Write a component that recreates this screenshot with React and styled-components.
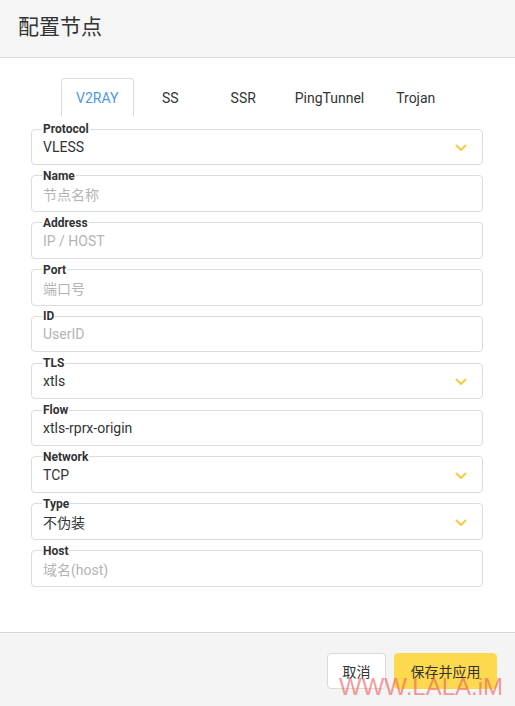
import React from "react";
import styled, { createGlobalStyle } from "styled-components";

const Global = createGlobalStyle`
  html, body { margin: 0; padding: 0; background: #fff; }
  body { font-family: Roboto, "Noto Sans CJK SC", sans-serif; color: #333; }
  * { box-sizing: border-box; }
`;

const Page = styled.div`
  height: 706px;
  display: flex;
  flex-direction: column;
  position: relative;
  overflow: hidden;
`;

const Header = styled.header`
  height: 58px;
  flex: none;
  background: #f5f5f5;
  border-bottom: 1px solid #d9d9d9;
  display: flex;
  align-items: center;
  padding: 0 0 7px 18px;
  font-family: "Noto Sans CJK SC", sans-serif;
  font-size: 21px;
  color: #333;
`;

const Body = styled.main`
  flex: 1;
  padding: 20px 32px 0 31px;
`;

const Tabs = styled.nav`
  display: flex;
  justify-content: center;
  height: 38px;
  margin-bottom: 6px;
  padding-right: 1px;
`;

const Tab = styled.div`
  min-width: 73px;
  padding: 0 14px;
  display: flex;
  align-items: center;
  justify-content: center;
  font-size: 14px;
  color: ${(p) => (p.$active ? "#4f97e6" : "#333")};
  border: 1px solid ${(p) => (p.$active ? "#dedede" : "transparent")};
  border-bottom: none;
  border-radius: 4px 4px 0 0;
`;

const Field = styled.fieldset`
  margin: 0 0 3.85px;
  padding: 0 11px 6px;
  border: 1px solid #dcdcdc;
  border-radius: 4px;
  min-width: 0;
`;

const Legend = styled.legend`
  padding: 0 1px;
  margin-left: -1px;
  font-size: 12px;
  font-weight: 700;
  line-height: 14px;
  color: #333;
`;

const Row = styled.div`
  height: 22px;
  display: flex;
  align-items: center;
  justify-content: space-between;
  font-family: Roboto, "Noto Sans CJK SC", sans-serif;
  font-size: 14px;
  color: ${(p) => (p.$placeholder ? "#b4b4b4" : "#333")};
`;

const Chevron = styled.svg`
  width: 12px;
  height: 8px;
  margin-right: 4px;
  margin-top: 2px;
`;

const Footer = styled.footer`
  height: 74px;
  flex: none;
  background: #f4f4f4;
  border-top: 1px solid #d6d6d6;
  display: flex;
  justify-content: flex-end;
  align-items: flex-start;
  gap: 8px;
  padding: 20px 18px 0 0;
`;

const Button = styled.button`
  height: 36px;
  width: ${(p) => (p.$primary ? "103px" : "59px")};
  padding: 0;
  border-radius: 4px;
  border: 1px solid ${(p) => (p.$primary ? "#fdd94f" : "#dadada")};
  background: ${(p) => (p.$primary ? "#fdd94f" : "#fff")};
  color: #333;
  font-family: "Noto Sans CJK SC", sans-serif;
  font-size: 14px;
  cursor: pointer;
`;

const Watermark = styled.div`
  position: absolute;
  left: 339px;
  top: 673px;
  font-family: "Liberation Sans", Arial, sans-serif;
  font-size: 24px;
  line-height: 28px;
  color: rgba(240, 90, 90, 0.62);
  pointer-events: none;
`;

const fields = [
  { label: "Protocol", value: "VLESS", select: true },
  { label: "Name", value: "节点名称", ph: true },
  { label: "Address", value: "IP / HOST", ph: true },
  { label: "Port", value: "端口号", ph: true },
  { label: "ID", value: "UserID", ph: true },
  { label: "TLS", value: "xtls", select: true },
  { label: "Flow", value: "xtls-rprx-origin" },
  { label: "Network", value: "TCP", select: true },
  { label: "Type", value: "不伪装", select: true },
  { label: "Host", value: "域名(host)", ph: true },
];

const tabs = ["V2RAY", "SS", "SSR", "PingTunnel", "Trojan"];

export default function App() {
  return (
    <Page>
      <Global />
      <Header>配置节点</Header>
      <Body>
        <Tabs>
          {tabs.map((t, i) => (
            <Tab key={t} $active={i === 0}>
              {t}
            </Tab>
          ))}
        </Tabs>
        {fields.map((f) => (
          <Field key={f.label}>
            <Legend>{f.label}</Legend>
            <Row $placeholder={f.ph}>
              <span>{f.value}</span>
              {f.select && (
                <Chevron viewBox="0 0 12 8">
                  <path
                    d="M1.5 1.5 L6 6 L10.5 1.5"
                    fill="none"
                    stroke="#f7cb45"
                    strokeWidth="2"
                    strokeLinecap="round"
                    strokeLinejoin="round"
                  />
                </Chevron>
              )}
            </Row>
          </Field>
        ))}
      </Body>
      <Footer>
        <Button>取消</Button>
        <Button $primary>保存并应用</Button>
      </Footer>
      <Watermark>WWW.LALA.iM</Watermark>
    </Page>
  );
}
